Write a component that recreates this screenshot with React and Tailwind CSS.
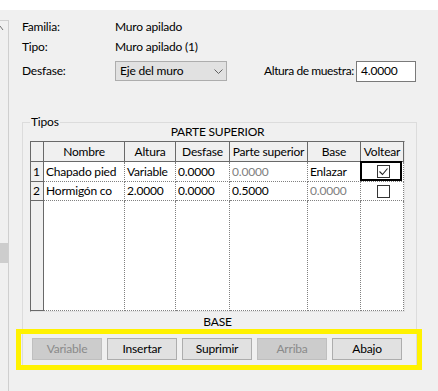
import React from "react";

const cols = [13, 81, 51, 54, 78, 53, 43];
const headers = ["", "Nombre", "Altura", "Desfase", "Parte superior", "Base", "Voltear"];

function Check({ checked }) {
  return (
    <div className="w-[13px] h-[13px] border border-[#333333] bg-white flex items-center justify-center">
      {checked && (
        <svg width="11" height="11" viewBox="0 0 11 11">
          <polyline points="1.5,5.5 4.5,8.5 9.5,2.5" fill="none" stroke="#222222" strokeWidth="1.1" />
        </svg>
      )}
    </div>
  );
}

function Cell({ w, children, gray, className = "" }) {
  return (
    <div
      className={`h-full shrink-0 border-r border-b border-dotted border-[#808080] pl-[2px] flex items-center whitespace-nowrap overflow-hidden ${gray ? "text-[#808080]" : ""} ${className}`}
      style={{ width: w }}
    >
      {children}
    </div>
  );
}

function RowHead({ children }) {
  return (
    <div className="h-full w-[13px] shrink-0 bg-[#f0f0f0] border-r border-b border-[#696969] pl-[2px] flex items-center">
      {children}
    </div>
  );
}

function Btn({ children, disabled }) {
  return (
    <div
      className={`w-[70px] h-[22px] flex items-center justify-center border ${
        disabled ? "bg-[#cccccc] border-[#bfbfbf] text-[#8a8a8a]" : "bg-[#e1e1e1] border-[#adadad] text-black"
      }`}
    >
      {children}
    </div>
  );
}

export default function App() {
  return (
    <div className="w-[438px] h-[391px] bg-[#f0f0f0] relative overflow-hidden text-[12px] tracking-[-0.2px] leading-none text-black font-['Lato','Noto_Sans',sans-serif] flex flex-col">
      <div className="h-[10px] bg-white shrink-0" />
      <div className="flex flex-1 min-h-0">
        {/* left scroll strip */}
        <div className="w-[9px] shrink-0 mt-[10px] border-t border-r border-[#cfcfcf] relative">
          <svg className="absolute left-0 top-[5px]" width="5" height="6" viewBox="0 0 5 6">
            <polyline points="0,0 3,4" fill="none" stroke="#707070" strokeWidth="1" />
          </svg>
          <div className="absolute left-0 top-[222px] w-full h-[20px] bg-[#cdcdcd]" />
        </div>

        {/* main */}
        <div className="flex-1 flex flex-col pl-[13px] pt-[7px]">
          <div className="h-[20px] flex items-center">
            <div className="w-[93px]">Familia:</div>
            <div>Muro apilado</div>
          </div>
          <div className="h-[20px] flex items-center">
            <div className="w-[93px]">Tipo:</div>
            <div>Muro apilado (1)</div>
          </div>
          <div className="h-[20px] mt-[4px] flex items-center">
            <div className="w-[93px]">Desfase:</div>
            <div className="w-[112px] h-[20px] bg-[#e1e1e1] border border-[#adadad] flex items-center pl-[4px] pr-[3px] justify-between">
              <span>Eje del muro</span>
              <svg width="9" height="5" viewBox="0 0 9 5">
                <polyline points="0.5,0.5 4.5,4.5 8.5,0.5" fill="none" stroke="#606060" strokeWidth="1" />
              </svg>
            </div>
            <div className="ml-[37px] w-[92px] whitespace-nowrap tracking-[-0.4px]">Altura de muestra:</div>
            <div className="w-[60px] h-[21px] bg-white border border-[#7a7a7a] flex items-center pl-[4px]">4.0000</div>
          </div>

          {/* group box */}
          <div className="mt-[41px] w-[395px] h-[245px] border border-[#dcdcdc] relative flex flex-col">
            <div className="absolute left-[7px] top-[-9px] h-[16px] px-[1px] bg-[#f0f0f0] flex items-center">Tipos</div>
            <div className="h-[16px] mt-[1px] flex items-center justify-center w-[375px] ml-[7px]">PARTE SUPERIOR</div>
            <div className="mt-[1px] ml-[7px] w-[375px] h-[171px] border-l border-t border-[#696969] border-r border-b border-r-[#e3e3e3] border-b-[#e3e3e3] bg-white flex flex-col">
              {/* header */}
              <div className="h-[20px] flex bg-[#f0f0f0] shrink-0">
                {headers.map((h, i) => (
                  <div
                    key={i}
                    className="h-full shrink-0 border-r border-b border-[#696969] flex items-center justify-center whitespace-nowrap"
                    style={{ width: cols[i] }}
                  >
                    {h}
                  </div>
                ))}
              </div>
              {/* row 1 */}
              <div className="h-[20px] flex shrink-0">
                <RowHead>1</RowHead>
                <Cell w={cols[1]}>Chapado pied</Cell>
                <Cell w={cols[2]}>Variable</Cell>
                <Cell w={cols[3]}>0.0000</Cell>
                <Cell w={cols[4]} gray>0.0000</Cell>
                <Cell w={cols[5]}>Enlazar</Cell>
                <Cell w={cols[6]} className="relative justify-center pl-0 overflow-visible">
                  <Check checked />
                  <div className="absolute left-[-1px] top-[-1px] right-[1px] bottom-0 border-2 border-black" />
                </Cell>
              </div>
              {/* row 2 */}
              <div className="h-[19px] flex shrink-0">
                <RowHead>2</RowHead>
                <Cell w={cols[1]}>Hormigón co</Cell>
                <Cell w={cols[2]}>2.0000</Cell>
                <Cell w={cols[3]}>0.0000</Cell>
                <Cell w={cols[4]}>0.5000</Cell>
                <Cell w={cols[5]} gray>0.0000</Cell>
                <Cell w={cols[6]} className="justify-center pl-0">
                  <Check />
                </Cell>
              </div>
              {/* empty area */}
              <div className="flex-1 flex">
                <RowHead />
                {cols.slice(1).map((w, i) => (
                  <Cell key={i} w={w} />
                ))}
              </div>
            </div>
            <div className="mt-[2px] h-[16px] flex items-center justify-center w-[375px] ml-[7px]">BASE</div>
            <div className="mt-[8px] ml-[9px] flex gap-[5px]">
              <Btn disabled>Variable</Btn>
              <Btn>Insertar</Btn>
              <Btn>Suprimir</Btn>
              <Btn disabled>Arriba</Btn>
              <Btn>Abajo</Btn>
            </div>
          </div>
        </div>
      </div>

      {/* highlight annotation */}
      <div className="absolute left-[16px] top-[329px] w-[406px] h-[41px] border-[5px] border-[#fff200]" />
    </div>
  );
}
